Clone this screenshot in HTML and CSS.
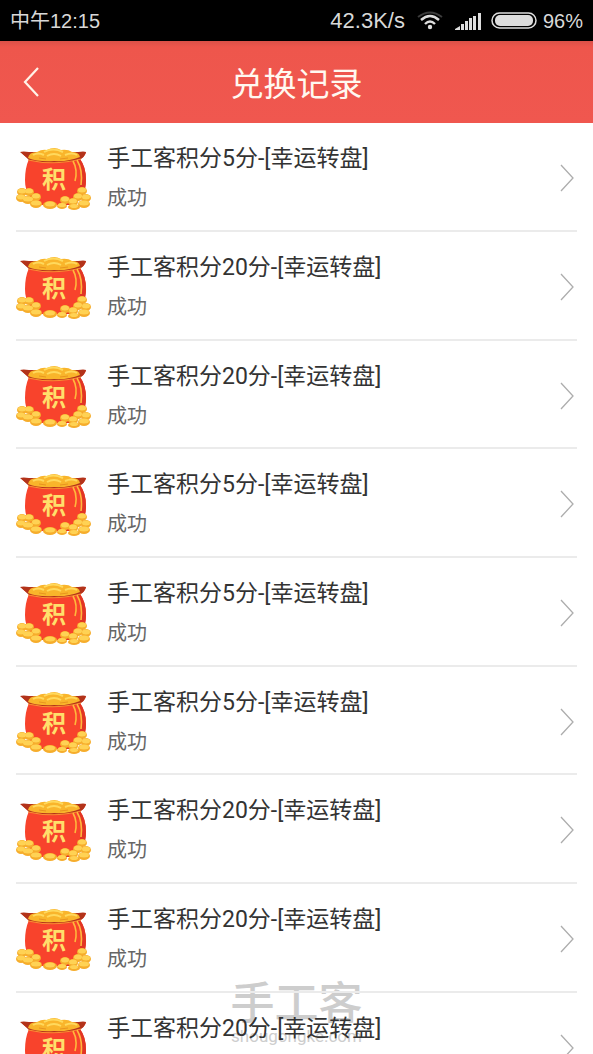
FILE: index.html
```html
<!DOCTYPE html>
<html lang="zh-CN">
<head>
	<title>兑换记录</title>
	<meta charset="utf-8">
	<meta name="viewport" content="width=device-width, initial-scale=1">
	<link rel="stylesheet" href="styles.css">
</head>
<body>
	<!-- shared icons -->
	<svg class="defs" aria-hidden="true">
		<symbol id="pot" viewBox="0 0 76 64">
			<path d="M5 4Q8 8 13 11Q9 20 9 32C9 45 15 53 25 57H55C65 53 70 44 70 32Q70 19 64 11Q69 9 70 4Z" fill="#f8432c"/>
			<path d="M64 11Q70 19 70 32C70 44 65 53 55 57H49Q64 49 65 32Q65 20 61 12Z" fill="#e23524"/>
			<path d="M4 4Q7 3 13 4L62 4Q68 3 70 4Q69 9 63 12Q38 17 13 12Q9 8 4 4Z" fill="#b3331a"/>
			<path d="M12 10Q13 4 21 4Q26 1 31 2Q38 -2 45 2Q52 1 56 4Q63 4 64 9Q52 14 38 13Q22 14 12 10Z" fill="#f9b52b"/>
			<path d="M28 4Q37 -1 47 4M17 7Q22 4 28 7M31 8Q38 4 45 8M49 7Q56 4 61 7" fill="none" stroke="#ffd95c" stroke-width="2"/>
			<path d="M23 10L30 11M44 11L52 10" stroke="#e8951f" stroke-width="1"/>
			<path d="M12 12Q38 18 65 11" fill="none" stroke="#f98d33" stroke-width="1.2"/>
			<path d="M57 13Q62 22 59 33M61 12Q67 22 65 37" fill="none" stroke="#ffb83c" stroke-width="1.6"/>
			<g fill="#f6ad2c">
				<ellipse cx="6" cy="44" rx="5" ry="4"/>
				<ellipse cx="13" cy="44" rx="5" ry="4"/>
				<ellipse cx="5" cy="50" rx="5" ry="4"/>
				<ellipse cx="20" cy="49" rx="5" ry="4"/>
				<ellipse cx="12" cy="52" rx="6" ry="4"/>
				<ellipse cx="20" cy="56" rx="6" ry="4"/>
				<ellipse cx="34" cy="57" rx="7" ry="4"/>
				<ellipse cx="66" cy="43" rx="5" ry="4"/>
				<ellipse cx="62" cy="49" rx="5" ry="4"/>
				<ellipse cx="70" cy="50" rx="5" ry="4"/>
				<ellipse cx="49" cy="52" rx="5" ry="4"/>
				<ellipse cx="46" cy="58" rx="5" ry="3"/>
				<ellipse cx="57" cy="54" rx="5" ry="4"/>
				<ellipse cx="58" cy="59" rx="6" ry="3"/>
				<ellipse cx="68" cy="56" rx="6" ry="4"/>
			</g>
			<g fill="#ffd254">
				<ellipse cx="6" cy="43" rx="4" ry="2.5"/>
				<ellipse cx="13" cy="43" rx="4" ry="2.5"/>
				<ellipse cx="5" cy="49" rx="4" ry="2.5"/>
				<ellipse cx="20" cy="48" rx="4" ry="2.5"/>
				<ellipse cx="12" cy="51" rx="5" ry="2.5"/>
				<ellipse cx="20" cy="55" rx="5" ry="2.5"/>
				<ellipse cx="34" cy="56" rx="5" ry="2.5"/>
				<ellipse cx="66" cy="42" rx="4" ry="2.5"/>
				<ellipse cx="62" cy="48" rx="4" ry="2.5"/>
				<ellipse cx="70" cy="49" rx="4" ry="2.5"/>
				<ellipse cx="49" cy="51" rx="4" ry="2.5"/>
				<ellipse cx="46" cy="57" rx="4" ry="2"/>
				<ellipse cx="57" cy="53" rx="4" ry="2.5"/>
				<ellipse cx="58" cy="58" rx="4" ry="2"/>
				<ellipse cx="68" cy="55" rx="5" ry="2.5"/>
			</g>
		</symbol>
		<symbol id="arrow" viewBox="0 0 14 28">
			<path d="M1 1L13 14L1 27" fill="none" stroke="#adadad" stroke-width="1.3"/>
		</symbol>
	</svg>

	<div class="page">
		<div class="status">
			<span class="time">中午12:15</span>
			<span class="speed">42.3K/s</span>
			<svg class="wifi" width="26" height="20" viewBox="0 0 26 20" fill="none">
				<path d="M1 6Q13 -3 25 6" stroke="#3c3c3c" stroke-width="2"/>
				<path d="M4 9Q13 1 22 9M8 13Q13 8 18 13" stroke="#ddd" stroke-width="2.4"/>
				<circle cx="13" cy="16" r="2.2" fill="#ddd"/>
			</svg>
			<svg class="signal" width="26" height="18" viewBox="0 0 26 18" fill="#ddd">
				<path d="M0 18V17L5 14V18ZM6 12H9V18H6ZM10 9H13V18H10ZM14 6H17V18H14ZM18 4H21V18H18ZM23 1H26V18H23Z"/>
			</svg>
			<svg class="battery" width="46" height="17" viewBox="0 0 46 17">
				<rect x="1" y="1" width="44" height="15" rx="7.5" fill="none" stroke="#ddd" stroke-width="1.5"/>
				<rect x="4" y="3" width="38" height="11" rx="5" fill="#ddd"/>
			</svg>
			<span class="percent">96%</span>
		</div>

		<header class="header">
			<button class="back" type="button" aria-label="返回">
				<svg width="16" height="30" viewBox="0 0 16 30">
					<path d="M15 1L2 15L15 29" fill="none" stroke="#fff3e8" stroke-width="2.2"/>
				</svg>
			</button>
			<h1 class="title">兑换记录</h1>
		</header>

		<main class="list">
			<a class="item" href="#">
				<span class="pic"><svg class="pot"><use href="#pot"/></svg><span class="word">积</span></span>
				<span class="info"><span class="name">手工客积分5分-[幸运转盘]</span><span class="state">成功</span></span>
				<svg class="arrow"><use href="#arrow"/></svg>
			</a>
			<a class="item" href="#">
				<span class="pic"><svg class="pot"><use href="#pot"/></svg><span class="word">积</span></span>
				<span class="info"><span class="name">手工客积分20分-[幸运转盘]</span><span class="state">成功</span></span>
				<svg class="arrow"><use href="#arrow"/></svg>
			</a>
			<a class="item" href="#">
				<span class="pic"><svg class="pot"><use href="#pot"/></svg><span class="word">积</span></span>
				<span class="info"><span class="name">手工客积分20分-[幸运转盘]</span><span class="state">成功</span></span>
				<svg class="arrow"><use href="#arrow"/></svg>
			</a>
			<a class="item" href="#">
				<span class="pic"><svg class="pot"><use href="#pot"/></svg><span class="word">积</span></span>
				<span class="info"><span class="name">手工客积分5分-[幸运转盘]</span><span class="state">成功</span></span>
				<svg class="arrow"><use href="#arrow"/></svg>
			</a>
			<a class="item" href="#">
				<span class="pic"><svg class="pot"><use href="#pot"/></svg><span class="word">积</span></span>
				<span class="info"><span class="name">手工客积分5分-[幸运转盘]</span><span class="state">成功</span></span>
				<svg class="arrow"><use href="#arrow"/></svg>
			</a>
			<a class="item" href="#">
				<span class="pic"><svg class="pot"><use href="#pot"/></svg><span class="word">积</span></span>
				<span class="info"><span class="name">手工客积分5分-[幸运转盘]</span><span class="state">成功</span></span>
				<svg class="arrow"><use href="#arrow"/></svg>
			</a>
			<a class="item" href="#">
				<span class="pic"><svg class="pot"><use href="#pot"/></svg><span class="word">积</span></span>
				<span class="info"><span class="name">手工客积分20分-[幸运转盘]</span><span class="state">成功</span></span>
				<svg class="arrow"><use href="#arrow"/></svg>
			</a>
			<a class="item" href="#">
				<span class="pic"><svg class="pot"><use href="#pot"/></svg><span class="word">积</span></span>
				<span class="info"><span class="name">手工客积分20分-[幸运转盘]</span><span class="state">成功</span></span>
				<svg class="arrow"><use href="#arrow"/></svg>
			</a>
			<a class="item" href="#">
				<span class="pic"><svg class="pot"><use href="#pot"/></svg><span class="word">积</span></span>
				<span class="info"><span class="name">手工客积分20分-[幸运转盘]</span><span class="state">成功</span></span>
				<svg class="arrow"><use href="#arrow"/></svg>
			</a>
		</main>

		<div class="mark">
			<span class="mark-name">手工客</span>
			<span class="mark-site">shougongke.com</span>
		</div>
	</div>
</body>
</html>
```
FILE: styles.css
```css
*{padding:0;margin:0;box-sizing:border-box;}
body{background:#fff;font-family:Roboto, "Noto Sans CJK SC", sans-serif;color:#333;}

.defs{position:absolute;width:0;height:0;}
.page{display:flex;flex-direction:column;height:100vh;position:relative;overflow:hidden;}

/* status bar */
.status{display:flex;flex:none;align-items:center;height:41px;padding:0 10px;background:#000;color:#d8d8d8;font:20px/40px "Liberation Sans", "Noto Sans CJK SC", sans-serif;}
.time{flex:1;}
.speed{font-size:22px;}
.wifi{margin-left:12px;}
.signal{margin-left:12px;}
.battery{margin:0 6px 0 10px;}

/* header */
.header{display:flex;flex:none;align-items:center;height:82px;padding:0 16px;background:linear-gradient(#db5148, #ee564c 6px, #f0574f);}
.back{display:flex;align-items:center;width:48px;height:48px;padding-left:7px;border:0;background:none;cursor:pointer;}
.title{flex:1;margin-right:48px;padding-top:6px;text-align:center;color:#fff8f0;font-size:33px;font-weight:400;line-height:48px;}

/* records */
.list{flex:1;min-height:0;padding:0 16px;overflow-y:auto;scrollbar-width:none;position:relative;z-index:1;}
.item{display:flex;align-items:flex-start;height:109px;padding-top:17px;border-bottom:2px solid #ebebeb;color:#333;text-decoration:none;}
.item:nth-child(3n){height:108px;}
.pic{position:relative;flex:none;width:76px;height:64px;margin-top:8px;}
.pot{display:block;width:76px;height:64px;}
.word{position:absolute;top:17px;left:26px;color:#ffdf6b;font-size:24px;font-weight:700;line-height:30px;}
.info{flex:1;margin-left:15px;}
.name{display:block;font-size:23px;line-height:38px;}
.state{display:block;color:#666;font-size:20px;line-height:40px;}
.arrow{flex:none;width:14px;height:28px;margin:24px 3px 0 0;}

/* watermark */
.mark{position:absolute;bottom:8px;left:0;right:0;text-align:center;color:#cdcdcd;}
.mark-name{display:block;font-size:44px;font-weight:500;line-height:44px;}
.mark-site{display:block;font-size:17px;line-height:20px;}
```
